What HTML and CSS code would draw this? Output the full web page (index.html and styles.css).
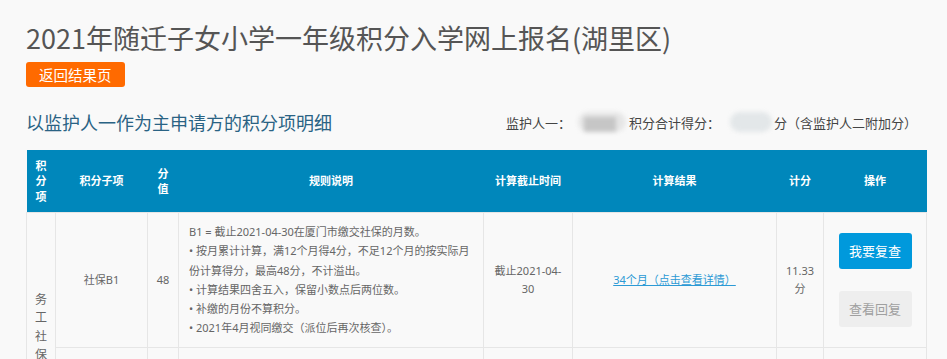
FILE: index.html
```html
<!DOCTYPE html>
<html lang="zh-CN">
<head>
  <meta charset="UTF-8" />
  <meta name="viewport" content="width=device-width, initial-scale=1.0" />
  <title>积分项明细</title>
  <link rel="stylesheet" href="styles.css">
</head>
<body>
  <div class="page">
    <h1 class="title">2021年随迁子女小学一年级积分入学网上报名(湖里区)</h1>
    <a class="btn-back" href="#">返回结果页</a>

    <div class="summary">
      <h2 class="summary-title">以监护人一作为主申请方的积分项明细</h2>
      <div class="summary-info">监护人一：<span class="blur blur-name"></span>积分合计得分：<span class="blur blur-score"></span>分（含监护人二附加分）</div>
    </div>

    <table class="score-table">
      <colgroup>
        <col class="c-item">
        <col class="c-sub">
        <col class="c-value">
        <col class="c-rule">
        <col class="c-date">
        <col class="c-result">
        <col class="c-score">
        <col class="c-op">
      </colgroup>
      <thead>
        <tr>
          <th>积分项</th>
          <th>积分子项</th>
          <th>分值</th>
          <th>规则说明</th>
          <th>计算截止时间</th>
          <th>计算结果</th>
          <th>计分</th>
          <th>操作</th>
        </tr>
      </thead>
      <tbody>
        <tr>
          <td class="item" rowspan="2">务工社保</td>
          <td>社保B1</td>
          <td>48</td>
          <td class="rule">
            <p>B1 = 截止2021-04-30在厦门市缴交社保的月数。</p>
            <p>• 按月累计计算，满12个月得4分，不足12个月的按实际月份计算得分，最高48分，不计溢出。</p>
            <p>• 计算结果四舍五入，保留小数点后两位数。</p>
            <p>• 补缴的月份不算积分。</p>
            <p>• 2021年4月视同缴交（派位后再次核查）。</p>
          </td>
          <td>截止2021-04-<wbr>30</td>
          <td><a class="detail-link" href="#">34个月（点击查看详情）</a></td>
          <td>11.33分</td>
          <td class="ops">
            <a class="btn btn-review" href="#">我要复查</a>
            <a class="btn btn-reply" href="#">查看回复</a>
          </td>
        </tr>
        <tr>
          <td>务工B2</td>
          <td>20</td>
          <td class="rule">
            <p>B2 = 截止2021-04-30在厦门市务工的年限。</p>
            <p>• 按年累计计算，每满1年得4分，最高20分。</p>
            <p>• 务工年限以劳动合同备案为准。</p>
            <p>• 2021年4月视同务工（派位后再次核查）。</p>
          </td>
          <td>截止2021-04-<wbr>30</td>
          <td><a class="detail-link" href="#">3年（点击查看详情）</a></td>
          <td>12.00分</td>
          <td class="ops">
            <a class="btn btn-review" href="#">我要复查</a>
          </td>
        </tr>
      </tbody>
    </table>
  </div>
</body>
</html>
```

FILE: styles.css
```css
body {
  margin: 0;
  background: #f9f9f9;
  font-family: "Noto Sans CJK SC", "Noto Sans", sans-serif;
  color: #555;
}

.page {
  width: 900px;
  margin-left: 26px;
  padding-top: 19px;
}

.title {
  margin: 0;
  font-size: 27px;
  font-weight: normal;
  line-height: 37px;
  color: #555;
}

.btn-back {
  display: inline-block;
  margin-top: 6px;
  height: 25px;
  line-height: 25px;
  padding: 0 13px;
  background: #ff6a00;
  color: #fff;
  font-size: 14.5px;
  text-decoration: none;
  border-radius: 3px;
}

.summary {
  display: flex;
  justify-content: space-between;
  align-items: center;
  height: 30px;
  margin-top: 20px;
  padding-right: 9px;
}

.summary-title {
  margin: 0;
  font-size: 18px;
  font-weight: normal;
  color: #2a6384;
}

.summary-info {
  display: flex;
  align-items: center;
  font-size: 13px;
  color: #444;
}

.blur {
  display: inline-block;
  height: 20px;
  border-radius: 10px;
  filter: blur(2px);
  position: relative;
}

.blur-name {
  width: 48px;
  margin: 0 3px 0 7px;
  background: #e6e6e6;
}

.blur-name::after {
  content: "";
  position: absolute;
  left: 6px;
  top: 5px;
  width: 32px;
  height: 15px;
  background: #c6c6c6;
}

.blur-score {
  width: 42px;
  margin: 0 2px 0 10px;
  background: #e3e7e9;
}

.score-table {
  width: 900px;
  margin-top: 13px;
  border-collapse: collapse;
  table-layout: fixed;
  font-family: "Noto Sans", "Noto Sans CJK SC", sans-serif;
  font-size: 11px;
  color: #666;
}

.c-item   { width: 29px; }
.c-sub    { width: 92px; }
.c-value  { width: 31px; }
.c-rule   { width: 305px; }
.c-date   { width: 89px; }
.c-result { width: 204px; }
.c-score  { width: 47px; }
.c-op     { width: 103px; }

.score-table th {
  height: 62px;
  padding: 0 8px;
  background: #0087bb;
  color: #fff;
  font-weight: bold;
  line-height: 15.5px;
  text-align: center;
}

.score-table td {
  padding: 8px;
  border: 1px solid #e6e6e6;
  line-height: 18px;
  text-align: center;
  vertical-align: middle;
  word-wrap: break-word;
}

.score-table td.item {
  font-size: 12px;
  line-height: 18.5px;
}

.score-table td.rule {
  padding: 9px 10px;
  text-align: left;
  line-height: 19.3px;
}

.rule p {
  margin: 0;
}

.detail-link {
  color: #2c9ad5;
  text-decoration: underline;
}

.ops {
  padding: 0;
}

.btn {
  display: block;
  width: 73px;
  height: 36px;
  margin: 0 auto;
  line-height: 36px;
  font-size: 13px;
  text-align: center;
  text-decoration: none;
  border-radius: 3px;
}

.btn + .btn {
  margin-top: 22px;
}

.btn-review {
  background: #0099dc;
  color: #fff;
}

.btn-reply {
  background: #eee;
  color: #a0a0a0;
}
```
